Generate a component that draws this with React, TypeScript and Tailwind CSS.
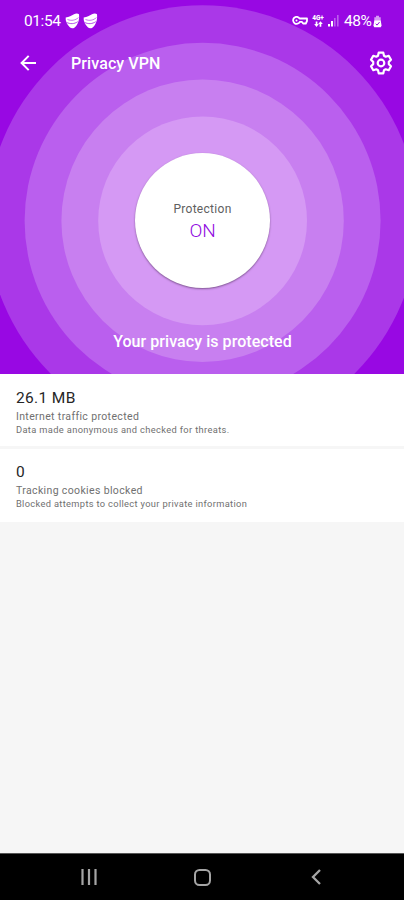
const rings = [
  { r: 215.5, fill: '#aa38e8' },
  { r: 178, fill: '#ba5fee' },
  { r: 141.2, fill: '#c87ff0' },
  { r: 104.4, fill: '#d599f4' },
];

const stats = [
  {
    value: '26.1 MB',
    label: 'Internet traffic protected',
    note: 'Data made anonymous and checked for threats.',
    noteClass: 'tracking-[0.35px]',
  },
  {
    value: '0',
    label: 'Tracking cookies blocked',
    note: 'Blocked attempts to collect your private information',
    noteClass: 'tracking-[0.33px]',
  },
];

function Rings() {
  return (
    <svg className="absolute inset-0 h-full w-full" viewBox="0 0 404 374" aria-hidden="true">
      {rings.map((ring) => (
        <circle key={ring.r} cx="202.6" cy="220.8" r={ring.r} fill={ring.fill} />
      ))}
    </svg>
  );
}

function ShieldMark() {
  return (
    <svg className="h-4 w-[15px]" viewBox="0 0 15 16">
      <path
        d="M.7 4.500C4 3.900 6.500 2.500 9 1.200c1.500-.8 4.100-.8 5 0 .6 5-.6 10.500-5 13.800-1.300.6-3.200.4-4.200-.7C2 11.500.2 8 .7 4.500Z"
        fill="#fff"
      />
      <path d="M2.500 6.500c4 1.600 7.800.8 11-1.900" fill="none" stroke="#9808e3" strokeWidth="0.8" opacity="0.7" />
      <path d="M1.300 9.300c4 2 8 1.700 11.500-.6" fill="none" stroke="#9808e3" strokeWidth="0.9" opacity="0.8" />
    </svg>
  );
}

function KeyIcon() {
  return (
    <svg className="h-[10px] w-[16px]" viewBox="0 0 16 10" fill="none" stroke="#fff" strokeWidth="1.8" strokeLinejoin="round">
      <path d="M7.600 2.500H15V5l-1.200 2.500h-2.700L9.800 5.800h-2A3.500 3.500 0 1 1 7.600 2.500Z" />
      <circle cx="4.500" cy="4.500" r="1" fill="#fff" stroke="none" />
    </svg>
  );
}

function NetworkIcon() {
  return (
    <div className="flex h-3 w-3 flex-col items-center">
      <span className="h-[6px] text-[6.5px] leading-[6px] font-black">4G+</span>
      <svg className="h-[6px] w-[9px]" viewBox="0 0 9 6" fill="#fff">
        <path d="M2.500 6 .2 3h1.500V.5h1.700V3h1.400ZM6.500.3 8.800 3H7.300v2.700H5.600V3H4.200Z" />
      </svg>
    </div>
  );
}

function SignalIcon() {
  return (
    <svg className="h-3 w-[11px]" viewBox="0 0 11 12" fill="#fff">
      <rect x="0" y="9" width="2" height="2.500" />
      <rect x="3" y="6" width="2" height="5.500" />
      <rect x="6" y="3" width="1.600" height="8.500" opacity="0.35" />
      <rect x="9" y="0" width="1.600" height="11.500" opacity="0.35" />
    </svg>
  );
}

function BatteryIcon() {
  return (
    <svg className="h-[13px] w-[9px]" viewBox="0 0 9 13">
      <path d="M3 .8h3v1.400h1.700v4H1.300v-4H3Z" fill="#fff" opacity="0.6" />
      <path d="M1.300 5.600h6.400l.9 5.200-.9 1.400H1.300l-.9-1.400Z" fill="#fff" />
      <path d="m2.700 8.800 1.400 1.300 2.400-3" fill="none" stroke="#9808e3" strokeWidth="1" />
    </svg>
  );
}

function StatusBar() {
  return (
    <div className="flex h-[42px] items-center pr-[22px] pl-6">
      <span className="w-[41px] pt-px text-[15.5px] tracking-[-0.4px] whitespace-nowrap">01:54</span>
      <div className="flex gap-[3px]">
        <ShieldMark />
        <ShieldMark />
      </div>
      <div className="ml-auto flex items-center">
        <KeyIcon />
        <div className="ml-1">
          <NetworkIcon />
        </div>
        <div className="ml-1">
          <SignalIcon />
        </div>
        <span className="ml-[5px] w-[29px] pt-px text-[15.5px] tracking-[-0.4px]">48%</span>
        <BatteryIcon />
      </div>
    </div>
  );
}

function AppBar() {
  return (
    <div className="flex h-[42px] items-center pr-[11px] pl-5">
      <svg className="h-4 w-4" viewBox="0 0 16 16" fill="none" stroke="#fff" strokeWidth="2">
        <path d="M16 8H1.700M8.700.9 1.600 8l7.100 7.100" />
      </svg>
      <h1 className="ml-[35px] pt-[2px] text-[16px] font-medium tracking-[0.1px]">Privacy VPN</h1>
      <svg className="ml-auto h-6 w-6" viewBox="0 0 24 24" fill="none" stroke="#fff" strokeWidth="2.200" strokeLinejoin="round">
        <path d="M9.700 1.700h4.600l.7 3 1.700 1 3-.9 2.300 4-2.200 2.100v2.200l2.200 2.100-2.300 4-3-.9-1.700 1-.7 3H9.700l-.7-3-1.700-1-3 .9-2.300-4 2.200-2.100v-2.200L2 8.800l2.300-4 3 .9 1.700-1Z" />
        <circle cx="12" cy="12" r="3.300" />
      </svg>
    </div>
  );
}

function NavBar() {
  return (
    <nav className="flex h-[47px] items-center border-t border-[#555] bg-black text-[#a5a5a5]">
      <svg className="ml-[81px] h-4 w-4" viewBox="0 0 16 16" fill="none" stroke="currentColor" strokeWidth="2.200">
        <path d="M1.500 0v16M8 0v16M14.500 0v16" />
      </svg>
      <svg className="ml-[97px] h-[17px] w-[17px]" viewBox="0 0 17 17" fill="none" stroke="currentColor" strokeWidth="2">
        <rect x="1" y="1" width="15" height="15" rx="4.500" />
      </svg>
      <svg className="ml-[100px] h-4 w-[10px]" viewBox="0 0 10 16" fill="none" stroke="currentColor" strokeWidth="2.300">
        <path d="M9 1 2 8l7 7" />
      </svg>
    </nav>
  );
}

export default function App() {
  return (
    <div className="flex h-[900px] w-[404px] flex-col overflow-hidden bg-[#f6f6f6] font-['Roboto',sans-serif]">
      <header className="relative h-[374px] shrink-0 overflow-hidden bg-[#9808e3] text-white">
        <Rings />
        <div className="relative">
          <StatusBar />
          <AppBar />
          <div className="mt-[69px] ml-[135px] flex h-[135px] w-[135px] flex-col items-center rounded-full bg-white pt-[47px] shadow-[0_1px_2px_rgba(70,40,80,0.6)]">
            <span className="text-[12px] leading-[18px] tracking-[0.3px] text-[#606060]">Protection</span>
            <span className="text-[19px] leading-[25px] font-light tracking-[-0.3px] text-[#8f08e0]">ON</span>
          </div>
          <p className="mt-[42px] pl-px text-center text-[16px] leading-6 font-medium tracking-[0.06px]">
            Your privacy is protected
          </p>
        </div>
      </header>

      <main className="flex flex-1 flex-col gap-[3px]">
        {stats.map((stat) => (
          <section key={stat.label} className="h-[72px] bg-white px-4 pt-[14px] last:h-[73px] last:pt-[13px]">
            <div className="text-[15.5px] leading-5 tracking-[0.35px] text-[#262626]">{stat.value}</div>
            <div className="pt-px text-[10.5px] leading-[15px] tracking-[0.36px] text-[#707070]">{stat.label}</div>
            <div className={`text-[9.3px] leading-3 whitespace-nowrap text-[#707070] ${stat.noteClass}`}>{stat.note}</div>
          </section>
        ))}
      </main>

      <NavBar />
    </div>
  );
}
